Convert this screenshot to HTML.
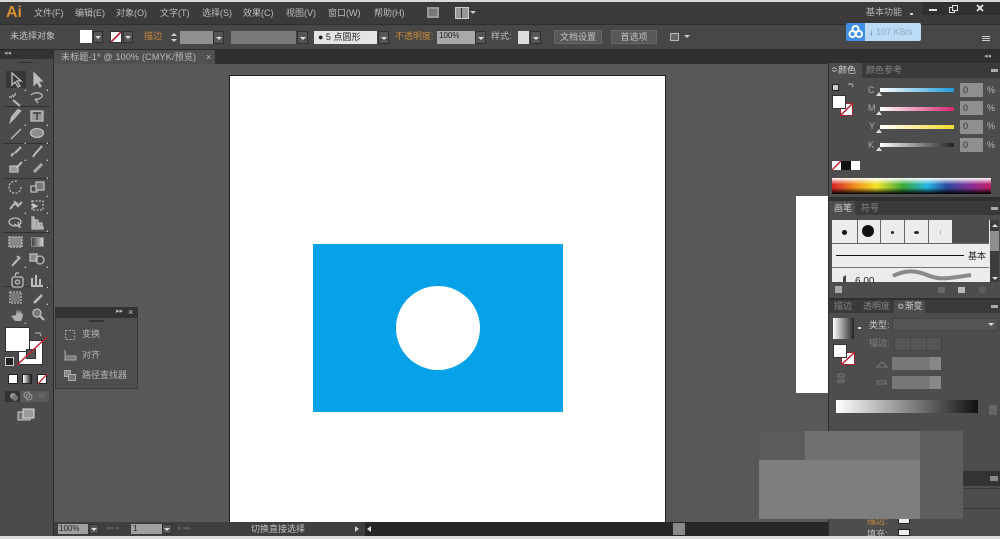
<!DOCTYPE html>
<html><head><meta charset="utf-8"><style>
*{box-sizing:border-box}
html,body{margin:0;padding:0;width:1000px;height:539px;overflow:hidden;background:#585858}
body{position:relative;font-family:"Liberation Sans","Noto Sans CJK SC",sans-serif;font-size:9px;color:#bdbdbd}
.a{position:absolute}
.t{position:absolute;white-space:nowrap;line-height:12px;filter:blur(.25px)}
.o{color:#c98a3a}
.d{color:#858585}
.b{position:absolute;height:13px;background:#585858;border:1px solid #666;color:#c4c4c4;text-align:center;line-height:12px}
.f{position:absolute;background:#8f8f8f}
.dd{position:absolute;background:#555;border:1px solid #2f2f2f}
.dd:after{content:"";position:absolute;left:50%;top:50%;margin:-1px 0 0 -3px;border:3px solid transparent;border-top:3px solid #ddd;border-bottom:0}
svg.s{position:absolute;left:0;top:0;width:1000px;height:539px}
</style></head><body>
<!-- top bars -->
<div class="a" style="left:0;top:0;width:1000px;height:2px;background:#d8d8d8"></div>
<div class="a" style="left:0;top:2px;width:1000px;height:22px;background:#3b3b3b"></div>
<div class="a" style="left:0;top:24px;width:1000px;height:26px;background:#474747;border-top:1px solid #2e2e2e;border-bottom:1px solid #2a2a2a"></div>
<div class="a" style="left:0;top:50px;width:1000px;height:14px;background:#2f2f2f"></div>
<div class="a" style="left:54px;top:50px;width:161px;height:14px;background:#505050"></div>

<!-- canvas -->
<div class="a" style="left:229px;top:75px;width:437px;height:447px;background:#fff;border:1px solid #222;border-bottom:0"></div>
<div class="a" style="left:313px;top:244px;width:250px;height:168px;background:#05a2e9"></div>
<div class="a" style="left:396px;top:286px;width:84px;height:84px;border-radius:50%;background:#fff"></div>
<div class="a" style="left:796px;top:196px;width:32px;height:197px;background:#fff"></div>

<!-- menu -->
<div class="t" style="left:6px;top:4px;font:bold 16px/18px 'Liberation Sans',sans-serif;color:#d9912f">Ai</div>
<div class="t" style="left:34px;top:7px">文件(F)</div>
<div class="t" style="left:75px;top:7px">编辑(E)</div>
<div class="t" style="left:116px;top:7px">对象(O)</div>
<div class="t" style="left:160px;top:7px">文字(T)</div>
<div class="t" style="left:202px;top:7px">选择(S)</div>
<div class="t" style="left:243px;top:7px">效果(C)</div>
<div class="t" style="left:286px;top:7px">视图(V)</div>
<div class="t" style="left:328px;top:7px">窗口(W)</div>
<div class="t" style="left:374px;top:7px">帮助(H)</div>
<div class="a" style="left:427px;top:7px;width:12px;height:11px;background:#777;border:2px solid #999"></div>
<div class="a" style="left:455px;top:7px;width:14px;height:12px;background:#999;border:1px solid #ccc"></div>
<div class="a" style="left:461px;top:8px;width:1px;height:10px;background:#333"></div>
<div class="a" style="left:470px;top:11px;border:3px solid transparent;border-top:3px solid #ccc;border-bottom:0"></div>
<div class="t" style="left:866px;top:6px;color:#b5b5b5">基本功能</div>
<div class="a" style="left:910px;top:13px;width:3px;height:2px;background:#ccc"></div>
<!-- window controls -->
<div class="a" style="left:922px;top:2px;width:78px;height:13px;background:#303030"></div>
<div class="a" style="left:929px;top:9px;width:8px;height:2px;background:#e0e0e0"></div>
<div class="a" style="left:949px;top:7px;width:6px;height:6px;border:1px solid #e0e0e0"></div>
<div class="a" style="left:952px;top:5px;width:6px;height:6px;border:1px solid #e0e0e0;background:#303030"></div>
<svg class="s" viewBox="0 0 1000 539"><path d="M977 5l6 6M983 5l-6 6" stroke="#e8e8e8" stroke-width="1.800"/></svg>

<!-- control bar -->
<div class="t" style="left:10px;top:30px;color:#c4c4c4">未选择对象</div>
<div class="a" style="left:80px;top:30px;width:12px;height:13px;background:#fff"></div>
<div class="dd" style="left:93px;top:31px;width:10px;height:12px"></div>
<div class="a" style="left:110px;top:31px;width:12px;height:12px;background:#fff;border:1px solid #333"></div>
<svg class="s" viewBox="0 0 1000 539"><path d="M111 42l10-10" stroke="#b5202c" stroke-width="1.600"/><path d="M171 36l3-3 3 3zM171 39l3 3 3-3z" fill="#ccc"/></svg>
<div class="dd" style="left:123px;top:31px;width:10px;height:12px"></div>
<div class="t o" style="left:144px;top:30px">描边</div>
<div class="f" style="left:180px;top:31px;width:33px;height:13px"></div>
<div class="dd" style="left:213px;top:31px;width:11px;height:13px"></div>
<div class="f" style="left:231px;top:31px;width:65px;height:13px;background:#7a7a7a"></div>
<div class="dd" style="left:297px;top:31px;width:11px;height:13px"></div>
<div class="a" style="left:314px;top:31px;width:63px;height:13px;background:#e4e4e4"></div>
<div class="t" style="left:318px;top:31px;color:#222">● 5 点圆形</div>
<div class="dd" style="left:378px;top:31px;width:11px;height:13px"></div>
<div class="t o" style="left:395px;top:30px">不透明度:</div>
<div class="f" style="left:437px;top:31px;width:38px;height:13px;background:#a8a8a8"></div>
<div class="t" style="left:439px;top:30px;color:#222;font-size:8px">100%</div>
<div class="dd" style="left:475px;top:31px;width:11px;height:13px"></div>
<div class="t" style="left:491px;top:30px">样式:</div>
<div class="a" style="left:518px;top:31px;width:11px;height:13px;background:#ddd"></div>
<div class="dd" style="left:530px;top:31px;width:11px;height:13px"></div>
<div class="b" style="left:554px;top:30px;width:48px;height:14px">文档设置</div>
<div class="b" style="left:611px;top:30px;width:46px;height:14px">首选项</div>
<div class="a" style="left:670px;top:33px;width:9px;height:8px;border:1px solid #bbb;background:#666"></div>
<div class="a" style="left:684px;top:35px;border:3px solid transparent;border-top:3px solid #ccc;border-bottom:0"></div>
<div class="a" style="left:982px;top:36px;width:8px;height:1px;background:#ccc"></div>
<div class="a" style="left:982px;top:38px;width:8px;height:1px;background:#ccc"></div>
<div class="a" style="left:982px;top:40px;width:8px;height:1px;background:#ccc"></div>
<!-- baidu pill -->
<div class="a" style="left:846px;top:23px;width:19px;height:18px;background:#3f8ee8;border-radius:2px 0 0 2px"></div>
<div class="a" style="left:865px;top:23px;width:56px;height:18px;background:#bcdcf6;border-radius:0 2px 2px 0"></div>
<svg class="s" viewBox="0 0 1000 539"><g fill="none" stroke="#fff" stroke-width="2"><circle cx="855.500" cy="29" r="3"/><circle cx="852.500" cy="34" r="3"/><circle cx="859" cy="34" r="3"/></g></svg>
<div class="t" style="left:869px;top:26px;color:#8fa9bf;font-size:9px"><span style="color:#2a6fb8">↓</span> 107 KB/s</div>

<!-- tab -->
<div class="t" style="left:61px;top:51px;color:#bdbdbd;letter-spacing:.2px">未标题-1* @ 100% (CMYK/预览)</div>
<div class="t" style="left:206px;top:51px;color:#bbb">×</div>

<!-- left toolbar -->
<div class="a" style="left:0;top:50px;width:54px;height:486px;background:#4b4b4b;border-right:1px solid #2d2d2d"></div>
<div class="a" style="left:0;top:50px;width:53px;height:9px;background:#333"></div>
<div class="t" style="left:4px;top:49px;font-size:7px;line-height:9px;color:#aaa">◂◂</div>
<div class="a" style="left:19px;top:62px;width:14px;height:1px;background:#2c2c2c"></div>
<div class="a" style="left:6px;top:71px;width:20px;height:17px;background:#383838"></div>
<svg class="s" viewBox="0 0 1000 539" style="filter:blur(.3px)">
<g stroke="#303030"><path d="M3 106.500H50M3 143.500H50M3 178.500H50M3 232.500H50M3 286.500H50"/></g>
<g fill="none" stroke="#bcbcbc" stroke-width="1.300">
<path d="M12 73v12l3-3 3 5 2-1-3-5h4z"/>
<path fill="#bcbcbc" d="M34 73v12l3-3 3 5 1-1-3-5h4z"/>
<path stroke-width="2" d="M13 100l7 6"/><path d="M12 95l2 2M9 97h3M15 93v3"/>
<path d="M31 95c3-3 9-3 11 0 1 3-5 5-7 4M35 99l3 4"/>
<path stroke-width="2" d="M20 111l-6 7-3 3 1-4 6-7z"/>
<rect x="31" y="111" width="12" height="10" fill="#999"/><path stroke="#333" d="M33 113h8M37 113v7"/>
<path d="M11 139l10-10"/>
<ellipse cx="37" cy="133" rx="6.500" ry="4.500" fill="#8d8d8d"/>
<path stroke-width="2" d="M21 147l-6 6M14 153l-3 3"/>
<path stroke-width="2" d="M42 146l-7 8M35 154l-2 3"/>
<path d="M10 166h8v6h-8z" fill="#999"/><path stroke-width="2" d="M22 162l-6 6"/>
<path stroke-width="3" stroke="#aaa" d="M34 172l8-8"/>
<path stroke-dasharray="2 1.500" d="M21 187a6 6 0 1 1-3-5"/>
<rect x="31" y="186" width="6" height="6"/><rect x="36" y="182" width="8" height="8" fill="#777"/>
<path stroke-width="2" d="M10 209l5-6 3 3 4-4"/><path d="M14 201l4 3"/>
<rect x="32" y="201" width="11" height="9" stroke-dasharray="2 1.500"/><path d="M33 204l4 2-4 2z" fill="#ddd"/>
<ellipse cx="15" cy="222" rx="6" ry="4"/><path d="M14 224l6 3-2-5"/>
<path fill="#999" d="M32 217h2v10h9v2h-11zM35 220h3v7h-3zM39 223h3v4h-3z"/>
<rect x="9" y="237" width="13" height="10" fill="#888" stroke-dasharray="2 1"/>
<path stroke-width="1.800" d="M12 266l5-6M17 256l3 3M14 264l6-7"/>
<rect x="30" y="254" width="7" height="7" fill="#888"/><circle cx="40" cy="260" r="4"/>
<rect x="12" y="277" width="11" height="10" rx="2"/><circle cx="17.500" cy="282" r="2"/><path d="M15 276l1-3h3"/>
<path d="M32 285v-7M36 285v-10M40 285v-6M31 286h12" stroke-width="2"/>
<rect x="10" y="292" width="11" height="11" stroke-dasharray="2 1"/><rect x="11" y="293" width="9" height="9" fill="#777" stroke="none"/>
<path stroke-width="2.500" d="M34 303l8-8"/>
<path fill="#b0b0b0" stroke="none" d="M11 316l4 5h6l2-5v-3l-1 2-1-5-1 4-1-5-1 5-1-5-1 6z"/>
<circle cx="37" cy="313" r="4" fill="#777"/><path stroke-width="2" d="M40 316l4 4"/>
</g>
<g fill="#bbb"><path d="M24 91h2v-2zM46 91h2v-2zM24 126h2v-2zM46 126h2v-2zM24 144h2v-2zM46 144h2v-2zM24 161h2v-2zM46 161h2v-2zM46 179h2v-2zM46 197h2v-2zM24 214h2v-2zM46 214h2v-2zM46 232h2v-2zM24 268h2v-2zM46 268h2v-2zM46 288h2v-2zM46 305h2v-2zM24 324h2v-2z"/></g>
</svg>
<div class="a" style="left:31px;top:237px;width:13px;height:10px;background:linear-gradient(90deg,#444,#d0d0d0);border:1px solid #888"></div>
<!-- fill/stroke -->
<div class="a" style="left:18px;top:340px;width:25px;height:25px;background:#fff;border:1px solid #333"></div>
<div class="a" style="left:5px;top:327px;width:25px;height:25px;background:#fff;border:1px solid #333"></div>
<div class="a" style="left:26px;top:349px;width:10px;height:10px;background:#555;border:1px solid #333"></div>
<div class="a" style="left:5px;top:357px;width:9px;height:9px;background:#222;border:1px solid #ccc"></div>
<div class="a" style="left:8px;top:374px;width:10px;height:10px;background:#fff;border:1px solid #222"></div>
<div class="a" style="left:22px;top:374px;width:10px;height:10px;background:linear-gradient(90deg,#fff,#222);border:1px solid #222"></div>
<div class="a" style="left:37px;top:374px;width:10px;height:10px;background:#fff;border:1px solid #222"></div>
<div class="a" style="left:5px;top:391px;width:15px;height:11px;background:#333"></div>
<div class="a" style="left:20px;top:391px;width:15px;height:11px;background:#5a5a5a"></div>
<div class="a" style="left:35px;top:391px;width:14px;height:11px;background:#5a5a5a"></div>
<svg class="s" viewBox="0 0 1000 539">
<path d="M17 365L47 337" stroke="#c0222f" stroke-width="1.500"/>
<path d="M38 384L47 374" stroke="#c0222f" stroke-width="1.300"/>
<path d="M35 333l5 0 1 3" fill="none" stroke="#bbb"/>
<circle cx="13" cy="396" r="3" fill="#999"/><circle cx="15" cy="398" r="3" fill="#777"/>
<circle cx="27" cy="395" r="3" fill="none" stroke="#999"/><circle cx="29" cy="397" r="3" fill="none" stroke="#999"/>
<rect x="39" y="393" width="6" height="5" fill="#666"/>
<rect x="18" y="412" width="12" height="8" fill="#777" stroke="#ccc"/><rect x="23" y="409" width="11" height="9" fill="#999" stroke="#ddd"/>
</svg>

<!-- floating panel -->
<div class="a" style="left:55px;top:307px;width:83px;height:82px;background:#4e4e4e;border:1px solid #3a3a3a"></div>
<div class="a" style="left:55px;top:307px;width:83px;height:11px;background:#333"></div>
<div class="t" style="left:116px;top:306px;font-size:7px;color:#bbb">▸▸</div>
<div class="t" style="left:128px;top:306px;color:#ccc">×</div>
<div class="a" style="left:89px;top:320px;width:15px;height:2px;background:#333"></div>
<svg class="s" viewBox="0 0 1000 539"><g fill="none" stroke="#aaa">
<rect x="65.500" y="330.500" width="9" height="9" stroke-dasharray="2 1.500"/>
<path d="M65 350v10h11v-4h-9" fill="#777"/>
<rect x="64.500" y="370.500" width="6" height="6" fill="#888"/><rect x="68.500" y="374.500" width="7" height="6" fill="#777"/>
</g></svg>
<div class="t" style="left:82px;top:328px;color:#b5b5b5">变换</div>
<div class="t" style="left:82px;top:349px;color:#b5b5b5">对齐</div>
<div class="t" style="left:82px;top:369px;color:#b5b5b5">路径查找器</div>

<!-- right panels -->
<div class="a" style="left:828px;top:53px;width:172px;height:483px;background:#4d4d4d;border-left:1px solid #2e2e2e"></div>
<div class="a" style="left:828px;top:53px;width:172px;height:10px;background:#2f2f2f"></div>
<div class="t" style="left:984px;top:52px;font-size:7px;line-height:10px;color:#aaa">◂◂</div>
<div class="a" style="left:829px;top:63px;width:171px;height:15px;background:#3a3a3a"></div>
<div class="a" style="left:829px;top:63px;width:33px;height:15px;background:#4d4d4d"></div>
<div class="t" style="left:831px;top:64px;color:#d0d0d0;font-size:8px">≎</div>
<div class="t" style="left:838px;top:64px;color:#d0d0d0">颜色</div>
<div class="t d" style="left:866px;top:64px">颜色参考</div>
<div class="a" style="left:991px;top:69px;width:7px;height:3px;background:#aaa"></div>
<div class="a" style="left:832px;top:84px;width:7px;height:7px;background:#ccc;border:1px solid #222"></div>
<div class="a" style="left:840px;top:103px;width:13px;height:13px;background:#fff;border:1px solid #a02030"></div>
<div class="a" style="left:832px;top:95px;width:14px;height:14px;background:#fff;border:1px solid #333"></div>
<svg class="s" viewBox="0 0 1000 539">
<path d="M840 116l13-13" stroke="#b5202c" stroke-width="1.500"/>
<path d="M848 84h4l1 3" fill="none" stroke="#bbb"/>
</svg>
<div class="t" style="left:868px;top:84px;color:#aaa">C</div>
<div class="t" style="left:868px;top:102px;color:#aaa">M</div>
<div class="t" style="left:869px;top:120px;color:#aaa">Y</div>
<div class="t" style="left:868px;top:139px;color:#aaa">K</div>
<div class="a" style="left:880px;top:88px;width:74px;height:4px;background:linear-gradient(90deg,#fff,#1d9ad6)"></div>
<div class="a" style="left:880px;top:107px;width:74px;height:4px;background:linear-gradient(90deg,#fff,#d8256f)"></div>
<div class="a" style="left:880px;top:125px;width:74px;height:4px;background:linear-gradient(90deg,#fff,#f2d92c)"></div>
<div class="a" style="left:880px;top:143px;width:74px;height:4px;background:linear-gradient(90deg,#fff,#222)"></div>
<div class="f" style="left:960px;top:83px;width:23px;height:14px"></div>
<div class="f" style="left:960px;top:101px;width:23px;height:14px"></div>
<div class="f" style="left:960px;top:120px;width:23px;height:14px"></div>
<div class="f" style="left:960px;top:138px;width:23px;height:14px"></div>
<div class="t" style="left:963px;top:84px;color:#333">0</div>
<div class="t" style="left:963px;top:102px;color:#333">0</div>
<div class="t" style="left:963px;top:120px;color:#333">0</div>
<div class="t" style="left:963px;top:139px;color:#333">0</div>
<div class="t" style="left:987px;top:84px;color:#bbb">%</div>
<div class="t" style="left:987px;top:102px;color:#bbb">%</div>
<div class="t" style="left:987px;top:120px;color:#bbb">%</div>
<div class="t" style="left:987px;top:139px;color:#bbb">%</div>
<svg class="s" viewBox="0 0 1000 539"><g fill="#ddd"><path d="M876 96l3-4 3 4zM876 115l3-4 3 4zM876 133l3-4 3 4zM876 151l3-4 3 4z"/></g></svg>
<div class="a" style="left:832px;top:161px;width:9px;height:9px;background:#fff"></div>
<div class="a" style="left:841px;top:161px;width:10px;height:9px;background:#111"></div>
<div class="a" style="left:851px;top:161px;width:9px;height:9px;background:#fff"></div>
<svg class="s" viewBox="0 0 1000 539"><path d="M832 170l9-9" stroke="#b5202c" stroke-width="1.300"/></svg>
<div class="a" style="left:832px;top:178px;width:159px;height:16px;background:linear-gradient(90deg,#d8222a 0%,#f08a1d 14%,#f4e52b 28%,#38a83a 45%,#25b7e6 60%,#2b4da0 72%,#8e2f97 88%,#c01f62 100%)"></div>
<div class="a" style="left:832px;top:178px;width:159px;height:16px;background:linear-gradient(180deg,#fff 0%,rgba(255,255,255,0) 40%,rgba(0,0,0,0) 60%,#000 100%)"></div>

<!-- brushes -->
<div class="a" style="left:829px;top:197px;width:171px;height:4px;background:#2f2f2f"></div>
<div class="a" style="left:829px;top:201px;width:171px;height:14px;background:#3a3a3a"></div>
<div class="a" style="left:829px;top:201px;width:26px;height:14px;background:#4d4d4d"></div>
<div class="t" style="left:834px;top:202px;color:#d0d0d0">画笔</div>
<div class="t d" style="left:861px;top:202px">符号</div>
<div class="a" style="left:991px;top:207px;width:7px;height:3px;background:#aaa"></div>
<div class="a" style="left:832px;top:220px;width:164px;height:67px;background:#ececec"></div>
<div class="a" style="left:952px;top:220px;width:37px;height:24px;background:#4d4d4d"></div>
<div class="a" style="left:857px;top:220px;width:1px;height:24px;background:#666"></div>
<div class="a" style="left:880px;top:220px;width:1px;height:24px;background:#666"></div>
<div class="a" style="left:904px;top:220px;width:1px;height:24px;background:#666"></div>
<div class="a" style="left:928px;top:220px;width:1px;height:24px;background:#666"></div>
<div class="a" style="left:832px;top:243px;width:157px;height:1px;background:#666"></div>
<div class="a" style="left:842px;top:230px;width:5px;height:5px;border-radius:50%;background:#111"></div>
<div class="a" style="left:862px;top:225px;width:12px;height:12px;border-radius:50%;background:#111"></div>
<div class="a" style="left:891px;top:231px;width:3px;height:3px;border-radius:50%;background:#222"></div>
<div class="a" style="left:914px;top:231px;width:5px;height:3px;border-radius:50%;background:#222"></div>
<div class="a" style="left:940px;top:230px;width:1px;height:5px;background:#bbb"></div>
<div class="a" style="left:836px;top:255px;width:128px;height:1px;background:#111"></div>
<div class="t" style="left:968px;top:250px;color:#222">基本</div>
<div class="a" style="left:832px;top:267px;width:157px;height:1px;background:#777"></div>
<div class="t" style="left:855px;top:276px;color:#222;font-size:10px">6.00</div>
<svg class="s" viewBox="0 0 1000 539">
<path d="M893 276c12-6 22-6 34-1s18 4 44 0" fill="none" stroke="#8a8a8a" stroke-width="4"/>
<path d="M843 282v-5l3-2v7z" fill="#444"/>
</svg>
<div class="a" style="left:832px;top:282px;width:168px;height:16px;background:#4d4d4d"></div>
<div class="a" style="left:990px;top:220px;width:9px;height:62px;background:#3c3c3c"></div>
<div class="a" style="left:990px;top:231px;width:9px;height:20px;background:#8f8f8f"></div>
<div class="a" style="left:992px;top:224px;border:3px solid transparent;border-bottom:3px solid #ddd;border-top:0"></div>
<div class="a" style="left:992px;top:277px;border:3px solid transparent;border-top:3px solid #ddd;border-bottom:0"></div>
<div class="a" style="left:835px;top:286px;width:7px;height:7px;background:#aaa"></div>
<div class="a" style="left:958px;top:287px;width:7px;height:6px;background:#bbb"></div>
<div class="a" style="left:938px;top:287px;width:7px;height:6px;background:#6a6a6a"></div>
<div class="a" style="left:979px;top:287px;width:7px;height:6px;background:#5c5c5c"></div>

<!-- gradient panel -->
<div class="a" style="left:829px;top:298px;width:171px;height:2px;background:#2f2f2f"></div>
<div class="a" style="left:829px;top:300px;width:171px;height:13px;background:#3a3a3a"></div>
<div class="a" style="left:894px;top:300px;width:31px;height:13px;background:#4d4d4d"></div>
<div class="t d" style="left:834px;top:300px">描边</div>
<div class="t d" style="left:863px;top:300px">透明度</div>
<div class="t" style="left:897px;top:300px;color:#d0d0d0">≎渐变</div>
<div class="a" style="left:991px;top:305px;width:7px;height:3px;background:#aaa"></div>
<div class="a" style="left:833px;top:318px;width:21px;height:21px;background:linear-gradient(90deg,#fff,#222)"></div>
<div class="a" style="left:858px;top:327px;width:3px;height:2px;background:#ddd"></div>
<div class="t" style="left:869px;top:319px;color:#c4c4c4">类型:</div>
<div class="a" style="left:892px;top:318px;width:106px;height:13px;background:#555;border:1px solid #444"></div>
<div class="a" style="left:988px;top:323px;border:3px solid transparent;border-top:3px solid #ddd;border-bottom:0"></div>
<div class="t d" style="left:869px;top:337px">描边:</div>
<div class="a" style="left:894px;top:337px;width:48px;height:14px;background:#565656;border:1px solid #444"></div>
<div class="a" style="left:910px;top:337px;width:1px;height:14px;background:#444"></div>
<div class="a" style="left:926px;top:337px;width:1px;height:14px;background:#444"></div>
<div class="a" style="left:841px;top:352px;width:14px;height:13px;background:#fff;border:1px solid #a02030"></div>
<div class="a" style="left:833px;top:344px;width:14px;height:14px;background:#fff;border:1px solid #333"></div>
<svg class="s" viewBox="0 0 1000 539"><path d="M841 365l14-13" stroke="#b5202c" stroke-width="1.500"/>
<path d="M877 367l5-5 5 5z M838 374h6v3h-6zM838 380h6v2h-6zM877 381h9v3h-9z" fill="none" stroke="#777"/></svg>
<div class="a" style="left:892px;top:357px;width:38px;height:13px;background:#787878"></div>
<div class="a" style="left:930px;top:357px;width:11px;height:13px;background:#888"></div>
<div class="a" style="left:892px;top:376px;width:38px;height:13px;background:#787878"></div>
<div class="a" style="left:930px;top:376px;width:11px;height:13px;background:#888"></div>
<div class="a" style="left:836px;top:400px;width:142px;height:13px;background:linear-gradient(90deg,#fff,#111)"></div>
<div class="a" style="left:989px;top:405px;width:8px;height:10px;background:#666"></div>

<!-- lower right panel -->
<div class="a" style="left:963px;top:471px;width:37px;height:15px;background:#333"></div>
<div class="a" style="left:990px;top:476px;width:8px;height:5px;background:#888"></div>
<div class="a" style="left:829px;top:488px;width:171px;height:1px;background:#3a3a3a"></div>
<div class="a" style="left:829px;top:508px;width:171px;height:1px;background:#3a3a3a"></div>
<div class="t o" style="left:867px;top:515px">描边:</div>
<div class="a" style="left:898px;top:516px;width:12px;height:8px;background:#eee;border:1px solid #222"></div>
<div class="t" style="left:867px;top:528px;color:#bbb">填充:</div>
<div class="a" style="left:898px;top:529px;width:12px;height:7px;background:#eee;border:1px solid #222"></div>

<!-- blurred patches -->
<div class="a" style="left:759px;top:431px;width:46px;height:29px;background:#5c5c5c"></div>
<div class="a" style="left:805px;top:431px;width:115px;height:29px;background:#707070"></div>
<div class="a" style="left:759px;top:460px;width:161px;height:59px;background:#7e7e7e"></div>
<div class="a" style="left:920px;top:431px;width:43px;height:88px;background:#5e5e5e"></div>

<!-- status bar -->
<div class="a" style="left:54px;top:522px;width:774px;height:14px;background:#3f3f3f"></div>
<div class="a" style="left:365px;top:522px;width:463px;height:14px;background:#272727"></div>
<div class="a" style="left:673px;top:523px;width:12px;height:12px;background:#8a8a8a"></div>
<div class="f" style="left:58px;top:524px;width:30px;height:10px;background:#a0a0a0"></div>
<div class="t" style="left:59px;top:523px;color:#222;font-size:8px">100%</div>
<div class="dd" style="left:89px;top:524px;width:10px;height:10px"></div>
<div class="t d" style="left:106px;top:523px;font-size:7px;color:#666">◂◂ ◂</div>
<div class="f" style="left:131px;top:524px;width:31px;height:10px;background:#a0a0a0"></div>
<div class="t" style="left:133px;top:523px;color:#222;font-size:8px">1</div>
<div class="dd" style="left:162px;top:524px;width:10px;height:10px"></div>
<div class="t" style="left:178px;top:523px;font-size:7px;color:#666">▸ ▸▸</div>
<div class="t" style="left:251px;top:523px;color:#c4c4c4">切换直接选择</div>
<div class="a" style="left:355px;top:526px;border:3px solid transparent;border-left:4px solid #ccc;border-right:0"></div>
<div class="a" style="left:367px;top:526px;border:3px solid transparent;border-right:4px solid #ddd;border-left:0"></div>
<div class="a" style="left:0;top:536px;width:1000px;height:3px;background:#dcdcdc"></div>
</body></html>
